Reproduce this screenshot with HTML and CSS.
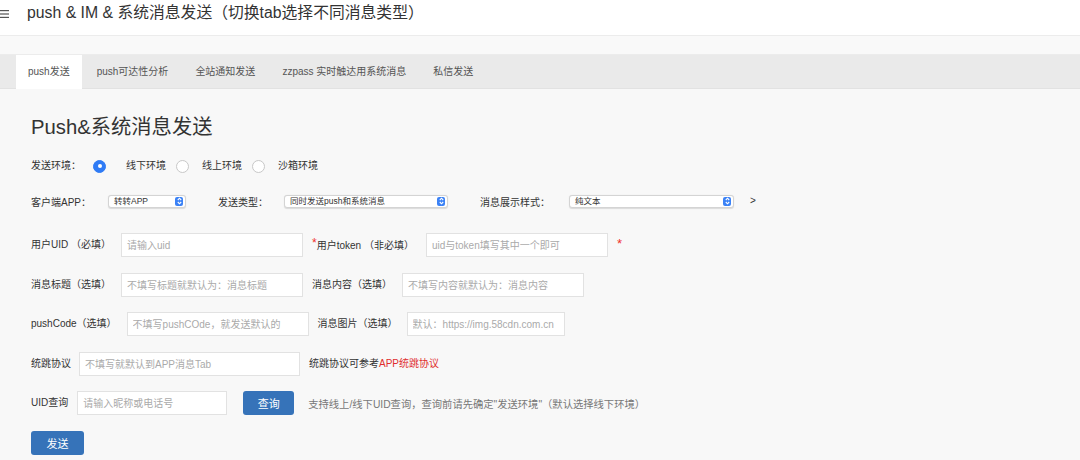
FILE: index.html
```html
<!DOCTYPE html>
<html lang="zh-CN">
<head>
<meta charset="utf-8">
<title>push &amp; IM</title>
<link rel="stylesheet" href="styles.css">
</head>
<body>
<header class="topbar">
  <svg class="menu-icon" width="9" height="8" viewBox="0 0 9 8"><rect x="0" y="0" width="9" height="1.2" fill="#555"/><rect x="0" y="3.4" width="9" height="1.2" fill="#555"/><rect x="0" y="6.8" width="9" height="1.2" fill="#555"/></svg>
  <span class="title">push &amp; IM &amp; 系统消息发送（切换tab选择不同消息类型）</span>
</header>
<div class="band"></div>
<nav class="tabs">
  <div class="tab active">push发送</div>
  <div class="tab">push可达性分析</div>
  <div class="tab">全站通知发送</div>
  <div class="tab">zzpass 实时触达用系统消息</div>
  <div class="tab">私信发送</div>
</nav>
<main class="content">
  <h1 class="heading">Push&amp;系统消息发送</h1>

  <div class="row row-env">
    <span class="label">发送环境：</span>
    <span class="radio checked r1"></span><span class="opt o1">线下环境</span>
    <span class="radio r2"></span><span class="opt o2">线上环境</span>
    <span class="radio r2"></span><span class="opt o3">沙箱环境</span>
  </div>

  <div class="row row-select">
    <span class="label">客户端APP：</span>
    <div class="select s1"><span class="select-text">转转APP</span><span class="spin"><svg width="5" height="8" viewBox="0 0 5 8"><path d="M0.8 3 L2.5 1.2 L4.2 3 M0.8 5 L2.5 6.8 L4.2 5" fill="none" stroke="#fff" stroke-width="1.1"/></svg></span></div>
    <span class="label l-type">发送类型：</span>
    <div class="select s2"><span class="select-text">同时发送push和系统消息</span><span class="spin"><svg width="5" height="8" viewBox="0 0 5 8"><path d="M0.8 3 L2.5 1.2 L4.2 3 M0.8 5 L2.5 6.8 L4.2 5" fill="none" stroke="#fff" stroke-width="1.1"/></svg></span></div>
    <span class="label l-style">消息展示样式：</span>
    <div class="select s3"><span class="select-text">纯文本</span><span class="spin"><svg width="5" height="8" viewBox="0 0 5 8"><path d="M0.8 3 L2.5 1.2 L4.2 3 M0.8 5 L2.5 6.8 L4.2 5" fill="none" stroke="#fff" stroke-width="1.1"/></svg></span></div>
    <span class="label gt">&gt;</span>
  </div>

  <div class="row row-input r3">
    <span class="label">用户UID （必填）</span>
    <input class="field f-uid" placeholder="请输入uid">
    <span class="label l2a"><span class="star">*</span>用户token （非必填）</span>
    <input class="field f-token" placeholder="uid与token填写其中一个即可">
    <span class="star star-after">*</span>
  </div>

  <div class="row row-input r4">
    <span class="label">消息标题（选填）</span>
    <input class="field f-title" placeholder="不填写标题就默认为：消息标题">
    <span class="label l2">消息内容（选填）</span>
    <input class="field f-content" placeholder="不填写内容就默认为：消息内容">
  </div>

  <div class="row row-input r5">
    <span class="label">pushCode（选填）</span>
    <input class="field f-code" placeholder="不填写pushCOde，就发送默认的">
    <span class="label l2">消息图片（选填）</span>
    <input class="field f-img" placeholder="默认：https://img.58cdn.com.cn">
  </div>

  <div class="row row-input r6">
    <span class="label">统跳协议</span>
    <input class="field f-jump" placeholder="不填写就默认到APP消息Tab">
    <span class="label l2">统跳协议可参考<span class="red">APP统跳协议</span></span>
  </div>

  <div class="row row-input r7">
    <span class="label">UID查询</span>
    <input class="field f-query" placeholder="请输入昵称或电话号">
    <button class="btn btn-query">查询</button>
    <span class="hint">支持线上/线下UID查询，查询前请先确定"发送环境"（默认选择线下环境）</span>
  </div>

  <div class="row r8">
    <button class="btn btn-send">发送</button>
  </div>
</main>
</body>
</html>
```

FILE: styles.css
```css
* { box-sizing: border-box; }
html, body { margin: 0; padding: 0; }
body {
  background: #f8f8f8;
  font-family: "Liberation Sans", "Noto Sans CJK SC", sans-serif;
  color: #333;
  width: 1080px;
  height: 460px;
  overflow: hidden;
}
.topbar {
  height: 36px;
  background: #fff;
  border-bottom: 1px solid #ececec;
  display: flex;
  align-items: flex-start;
  padding-top: 3px;
}
.menu-icon { margin: 7px 0 0 0; flex: none; }
.title {
  margin-left: 18px;
  font-size: 15.8px;
  line-height: 19px;
  color: #333;
}
.band {
  height: 19px;
  background: #f9f9f9;
  border-bottom: 1px solid #ececec;
}
.tabs {
  height: 34px;
  background: #eaeaea;
  border-bottom: 1px solid #e2e2e2;
  display: flex;
  padding-left: 16px;
  gap: 3px;
}
.tab {
  padding: 0 12px;
  font-size: 10px;
  line-height: 33px;
  color: #555;
}
.tab.active {
  background: #fff;
  height: 34px;
}
.content { padding-left: 31px; }
.heading {
  margin: 26px 0 0;
  font-size: 20.3px;
  line-height: 24px;
  font-weight: normal;
  color: #333;
}
.row { display: flex; align-items: center; }
.label { font-size: 10px; line-height: 14px; color: #333; white-space: nowrap; flex: none; }
.row-env { margin-top: 20px; height: 14px; }
.radio {
  width: 13px; height: 13px; border-radius: 50%;
  background: #fff;
  border: 1px solid #c8c8c8;
  flex: none;
}
.radio.checked {
  background: #2f7bf5;
  border-color: #2f7bf5;
  position: relative;
}
.radio.checked::after {
  content: "";
  position: absolute;
  left: 3.5px; top: 3.5px;
  width: 4px; height: 4px;
  border-radius: 50%;
  background: #fff;
}
.r1 { margin-left: 12px; }
.r2 { margin-left: 10px; }
.opt { font-size: 10px; line-height: 14px; color: #333; }
.o1 { margin-left: 20px; }
.o2, .o3 { margin-left: 13px; }

.row-select { margin-top: 21px; height: 14px; }
.row-select .label { position: relative; top: 2px; }
.select {
  height: 13px;
  background: #fff;
  border: 1px solid #d4d4d4;
  border-radius: 3px;
  box-shadow: 0 0.5px 1px rgba(0,0,0,0.12);
  display: flex;
  align-items: center;
  justify-content: space-between;
  padding: 0 2px 0 5px;
  flex: none;
}
.select-text { font-size: 8.5px; line-height: 11px; color: #333; }
.spin {
  width: 8px; height: 9px;
  background: #3b82f6;
  border-radius: 2px;
  display: flex; align-items: center; justify-content: center;
}
.s1 { width: 78px; margin-left: 17px; }
.l-type { margin-left: 32px; }
.s2 { width: 164px; margin-left: 16px; }
.l-style { margin-left: 32px; }
.s3 { width: 165px; margin-left: 19px; }
.gt { margin-left: 16px; top: 0 !important; }

.row-input { height: 24px; }
.r3 { margin-top: 25px; }
.r4 { margin-top: 16px; }
.r5 { margin-top: 15px; }
.r6 { margin-top: 16px; }
.r7 { margin-top: 15px; }
.r8 { margin-top: 16px; }

.field {
  height: 24px;
  border: 1px solid #e2e2e2;
  background: #fff;
  border-radius: 0;
  padding: 0 5px;
  font-family: "Liberation Sans", "Noto Sans CJK SC", sans-serif;
  font-size: 10px;
  color: #333;
  outline: none;
  flex: none;
  margin: 0;
}
.field::placeholder { color: #aaa; }
.f-uid, .f-title { width: 182px; margin-left: 10px; }
.f-code { width: 182px; margin-left: 10px; }
.f-jump { width: 221px; margin-left: 8px; }
.f-query { width: 150px; margin-left: 9px; }
.l2, .l2a { margin-left: 9px; }
.f-token { width: 182px; margin-left: 12px; }
.f-content { width: 182px; margin-left: 10px; }
.f-img { width: 158px; margin-left: 9px; }
.star { color: #f0302b; font-size: 12px; position: relative; top: -2px; }
.star-after { margin-left: 9px; font-size: 13px; }
.red { color: #e02d2d; }
.btn {
  height: 24px;
  border: none;
  border-radius: 3px;
  background: #3673b9;
  color: #fff;
  font-family: "Liberation Sans", "Noto Sans CJK SC", sans-serif;
  font-size: 11px;
  padding: 0;
  flex: none;
}
.btn-query { width: 51px; margin-left: 16px; }
.hint { margin-left: 14px; font-size: 10.3px; color: #777; white-space: nowrap; }
.btn-send { width: 53px; }
```
